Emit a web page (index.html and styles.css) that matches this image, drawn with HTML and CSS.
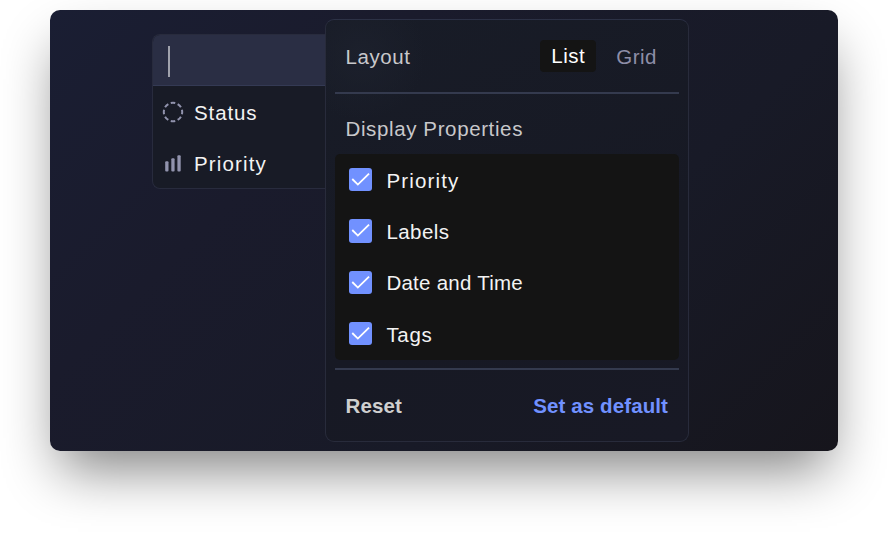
FILE: index.html
```html
<!DOCTYPE html>
<html lang="en">
<head>
<meta charset="utf-8">
<title>Display settings</title>
<link rel="stylesheet" href="styles.css">
</head>
<body>
<main class="stage">
  <section class="filter">
    <div class="search"><span class="caret"></span></div>
    <div class="filter-row">
      <svg width="22" height="22" viewBox="0 0 22 22" fill="none" stroke="#9193ad" stroke-width="2"><circle cx="11" cy="11" r="9.2" pathLength="80" stroke-dasharray="6.4 3.6" stroke-dashoffset="3.2"/></svg>
      <span class="t-status">Status</span>
    </div>
    <div class="filter-row">
      <svg width="22" height="22" viewBox="0 0 22 22" fill="#9193ad"><rect x="3.2" y="9.3" width="3.3" height="10.2" rx="1"/><rect x="9.3" y="6.3" width="3.3" height="13.2" rx="1"/><rect x="15.4" y="3.3" width="3.3" height="16.2" rx="1"/></svg>
      <span class="t-priority">Priority</span>
    </div>
  </section>
  <section class="panel">
    <header class="layout">
      <span class="muted t-layout">Layout</span>
      <div class="toggle"><button class="tab active">List</button><button class="tab">Grid</button></div>
    </header>
    <h2 class="heading muted">Display Properties</h2>
    <div class="options">
      <label class="option"><svg class="check" viewBox="0 0 23 23"><path d="M3.2 10.8 8.7 16.3 19.7 5.5"/></svg><span class="t-priority">Priority</span></label>
      <label class="option"><svg class="check" viewBox="0 0 23 23"><path d="M3.2 10.8 8.7 16.3 19.7 5.5"/></svg><span class="t-labels">Labels</span></label>
      <label class="option"><svg class="check" viewBox="0 0 23 23"><path d="M3.2 10.8 8.7 16.3 19.7 5.5"/></svg><span class="t-date">Date and Time</span></label>
      <label class="option"><svg class="check" viewBox="0 0 23 23"><path d="M3.2 10.8 8.7 16.3 19.7 5.5"/></svg><span class="t-tags">Tags</span></label>
    </div>
    <footer class="actions"><span class="reset">Reset</span><span class="default">Set as default</span></footer>
  </section>
</main>
</body>
</html>
```
FILE: styles.css
```css
* { box-sizing: border-box; }
body {
  margin: 0;
  padding: 10px 50px;
  height: 541px;
  overflow: hidden;
  background: #fff;
  color: #f3f3f3;
  font: 20.5px/24px "Liberation Sans", Arial, sans-serif;
}
.stage {
  display: flex;
  align-items: flex-start;
  width: 788px;
  height: 441px;
  padding: 9px 0 0 102px;
  border-radius: 10px;
  background: linear-gradient(135deg, #1a1e33 0%, #1a1b2c 30%, #181a27 65%, #16151c 100%);
  box-shadow: 0 28px 52px -10px rgba(0, 0, 0, .49);
}
.filter {
  width: 173px;
  height: 155px;
  margin-top: 15px;
  border: 1px solid #282b3d;
  border-right: 0;
  border-radius: 8px 0 0 8px;
  background: #181b26;
  overflow: hidden;
}
.search {
  display: flex;
  height: 51px;
  padding: 11px 0 0 15px;
  background: #2a2e44;
  border-bottom: 1px solid #343a54;
}
.caret { width: 1.5px; height: 31px; background: #a0a2ac; }
.filter-row {
  display: flex;
  align-items: center;
  gap: 10px;
  height: 51px;
  padding: 1px 0 0 9px;
}
.filter-row span { padding-top: 2px; }
.panel {
  width: 364px;
  height: 423px;
  padding: 0 9px;
  border: 1px solid #282b3b;
  border-top-color: #2c3145;
  border-radius: 9px;
  background: radial-gradient(circle at 35px 35px, #1c202c 0, rgba(24, 27, 38, 0) 65px), linear-gradient(155deg, #181c27, #171924 60%, #181925);
}
.layout {
  display: flex;
  align-items: center;
  justify-content: space-between;
  height: 74px;
  padding: 0 12px 0 10.5px;
  border-bottom: 2px solid #343a4e;
}
.muted { color: #c8c8cb; }
.layout .muted { padding-top: 2px; }
.toggle { display: flex; gap: 10px; }
.tab {
  height: 32px;
  padding: 0 10px;
  border: 0;
  border-radius: 4px;
  background: none;
  color: #8e8ea8;
  font: inherit;
  letter-spacing: .5px;
}
.tab:not(.active) { padding-top: 1px; }
.active { width: 56px; padding-bottom: 1px; background: #141414; color: #fff; }
.heading {
  height: 60px;
  margin: 0;
  padding: 23px 10.5px 0;
  font-size: 20.5px;
  font-weight: 400;
  letter-spacing: .62px;
}
.options {
  height: 206px;
  border-radius: 5px;
  background: #141414;
}
.option {
  display: flex;
  align-items: center;
  gap: 14px;
  height: 51.3px;
  padding: 0 14px;
}
.option span { padding-top: 2px; }
.check {
  width: 23.4px;
  height: 23.4px;
  border-radius: 3px;
  background: #7191ff;
  fill: none;
  stroke: #fff;
  stroke-width: 1.8;
}
.actions {
  display: flex;
  justify-content: space-between;
  margin-top: 8px;
  padding: 24px 11px 0 10.5px;
  border-top: 2px solid #343a4e;
  font-weight: 700;
}
.reset { color: #cfcfcf; letter-spacing: .1px; }
.default { color: #7191ff; letter-spacing: .1px; }
.t-status { letter-spacing: .9px; }
.t-priority { letter-spacing: 1.15px; }
.t-layout { letter-spacing: .6px; }
.t-labels { letter-spacing: .45px; }
.t-date { letter-spacing: .25px; }
.t-tags { letter-spacing: .7px; }
```
